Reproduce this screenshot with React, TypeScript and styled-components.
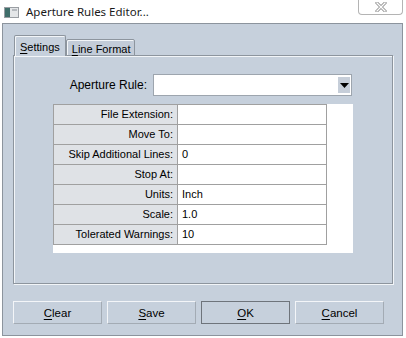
import styled, { createGlobalStyle } from 'styled-components';

const GlobalStyle = createGlobalStyle`
  html, body {
    margin: 0;
    padding: 0;
    background: #ffffff;
  }
  * {
    box-sizing: border-box;
  }
`;

const FONT = '"Liberation Sans", Arial, sans-serif';

const Window = styled.div`
  width: 406px;
  height: 338px;
  display: flex;
  flex-direction: column;
  background: #ffffff;
  font-family: ${FONT};
  font-size: 11px;
  color: #000;
`;

const TitleBar = styled.div`
  height: 23px;
  display: flex;
  align-items: flex-start;
  padding-left: 4px;
`;

const AppIcon = styled.svg`
  margin-top: 7px;
  flex-shrink: 0;
`;

const Title = styled.div`
  margin-left: 7px;
  margin-top: 4px;
  font-family: "Noto Sans", "Open Sans", sans-serif;
  font-size: 11.5px;
  line-height: 16px;
  color: #1a1a1a;
`;

const CloseButton = styled.div`
  margin-left: auto;
  margin-right: 3px;
  width: 45px;
  height: 15px;
  border: 1px solid #b4b4b4;
  border-top: none;
  border-radius: 0 0 4px 4px;
  display: flex;
  align-items: center;
  justify-content: center;
  background: #ffffff;
`;

const Frame = styled.div`
  flex: 1;
  margin: 0 3px 2px 2px;
  border: 1px solid #8c949d;
  background: #c6d0dc;
  padding: 11px 9px 10px 10px;
  display: flex;
  flex-direction: column;
`;

const TabStrip = styled.div`
  display: flex;
  align-items: flex-end;
  height: 21px;
  position: relative;
  z-index: 1;
  padding-left: 1px;
`;

const Tab = styled.div<{ $active?: boolean }>`
  height: ${(p) => (p.$active ? '21px' : '17px')};
  padding: ${(p) => (p.$active ? '4px 5px 0 5px' : '2px 4px 0 5px')};
  border: 1px solid #8d959e;
  border-bottom: ${(p) => (p.$active ? 'none' : '1px solid #8d959e')};
  border-radius: 2px 2px 0 0;
  background: ${(p) => (p.$active ? '#c6d0dc' : '#c3ccd8')};
  box-shadow: inset 1px 1px 0 #f2f5f8;
  font-size: 11px;
  line-height: 14px;
  white-space: nowrap;
`;

const Mnemonic = styled.span`
  text-decoration: underline;
  text-underline-offset: 2px;
`;

const Panel = styled.div`
  height: 229px;
  margin-top: -1px;
  border: 1px solid #8d959e;
  box-shadow: inset 1px 1px 0 #f2f5f8, 1px 1px 0 #f2f5f8;
  display: flex;
  flex-direction: column;
  padding: 18px 0 0 39px;
`;

const RuleRow = styled.div`
  display: flex;
  align-items: center;
  height: 22px;
  margin-left: -39px;
`;

const RuleLabel = styled.div`
  width: 139px;
  text-align: right;
  padding-right: 6px;
  font-size: 12px;
`;

const Combo = styled.div`
  width: 199px;
  height: 22px;
  border: 1px solid #9da5ae;
  background: #ffffff;
  display: flex;
  justify-content: flex-end;
  align-items: center;
  padding-right: 1px;
`;

const ComboArrow = styled.div`
  width: 12px;
  height: 16px;
  background: #c6ced9;
  display: flex;
  align-items: center;
  justify-content: center;
`;

const GridArea = styled.div`
  margin-top: 8px;
  width: 300px;
  height: 149px;
  background: #ffffff;
`;

const Grid = styled.div`
  width: 274px;
  display: grid;
  grid-template-columns: 125px 149px;
  border-top: 1px solid #a0a0a0;
`;

const LabelCell = styled.div`
  height: 20px;
  background: #dfe2e6;
  border-left: 1px solid #a0a0a0;
  border-right: 1px solid #a0a0a0;
  border-bottom: 1px solid #a0a0a0;
  text-align: right;
  padding-right: 4px;
  line-height: 19px;
`;

const ValueCell = styled.div`
  height: 20px;
  border-right: 1px solid #a0a0a0;
  border-bottom: 1px solid #a0a0a0;
  padding-left: 4px;
  line-height: 19px;
`;

const ButtonRow = styled.div`
  margin-top: 17px;
  display: flex;
  gap: 5px;
`;

const DialogButton = styled.div<{ $default?: boolean }>`
  width: 89px;
  height: 23px;
  display: flex;
  align-items: center;
  justify-content: center;
  font-size: 11.5px;
  background: #c6d0dc;
  border: 1px solid;
  border-color: ${(p) => (p.$default ? '#6e747b' : '#f3f5f8 #a3abb4 #a3abb4 #f3f5f8')};
`;

const rows: [string, string][] = [
  ['File Extension:', ''],
  ['Move To:', ''],
  ['Skip Additional Lines:', '0'],
  ['Stop At:', ''],
  ['Units:', 'Inch'],
  ['Scale:', '1.0'],
  ['Tolerated Warnings:', '10'],
];

const App = () => {
  return (
    <Window>
      <GlobalStyle />
      <TitleBar>
        <AppIcon width="15" height="11" viewBox="0 0 15 11">
          <rect x="0.5" y="0.5" width="14" height="10" fill="#e4e6e8" stroke="#9a9ea3" />
          <rect x="1" y="1" width="5" height="9" fill="#3f6e6a" />
          <rect x="8" y="2" width="5" height="2" fill="#b6babf" />
        </AppIcon>
        <Title>Aperture Rules Editor...</Title>
        <CloseButton>
          <svg width="12" height="10" viewBox="0 0 12 10">
            <path d="M2 1 L10 9 M10 1 L2 9" stroke="#8a8a8a" strokeWidth="3" strokeLinecap="square" />
            <path d="M2 1 L10 9 M10 1 L2 9" stroke="#ffffff" strokeWidth="1.4" strokeLinecap="square" />
          </svg>
        </CloseButton>
      </TitleBar>
      <Frame>
        <TabStrip>
          <Tab $active>
            <Mnemonic>S</Mnemonic>ettings
          </Tab>
          <Tab>
            <Mnemonic>L</Mnemonic>ine Format
          </Tab>
        </TabStrip>
        <Panel>
          <RuleRow>
            <RuleLabel>Aperture Rule:</RuleLabel>
            <Combo>
              <ComboArrow>
                <svg width="9" height="5" viewBox="0 0 9 5">
                  <path d="M0 0 H9 L4.5 5 Z" fill="#000" />
                </svg>
              </ComboArrow>
            </Combo>
          </RuleRow>
          <GridArea>
            <Grid>
              {rows.map(([label, value]) => (
                <>
                  <LabelCell key={label}>{label}</LabelCell>
                  <ValueCell key={label + '-v'}>{value}</ValueCell>
                </>
              ))}
            </Grid>
          </GridArea>
        </Panel>
        <ButtonRow>
          <DialogButton>
            <Mnemonic>C</Mnemonic>lear
          </DialogButton>
          <DialogButton>
            <Mnemonic>S</Mnemonic>ave
          </DialogButton>
          <DialogButton $default>
            <Mnemonic>O</Mnemonic>K
          </DialogButton>
          <DialogButton>
            <Mnemonic>C</Mnemonic>ancel
          </DialogButton>
        </ButtonRow>
      </Frame>
    </Window>
  );
};

export default App;
